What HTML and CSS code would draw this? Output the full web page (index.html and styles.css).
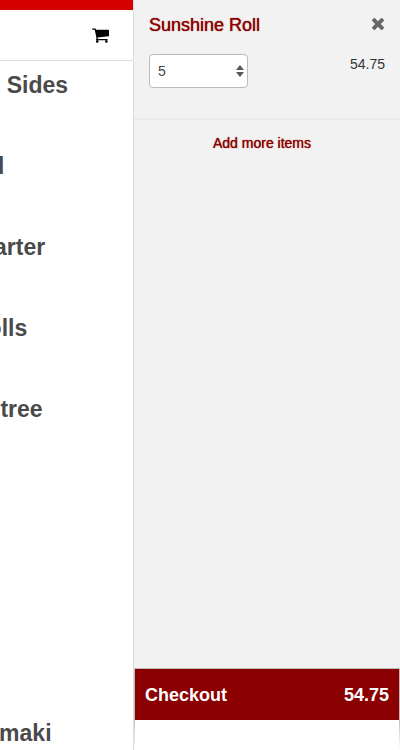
FILE: index.html
```html
<!DOCTYPE html>
<html lang="en">
<head>
    <meta charset="UTF-8">
    <meta name="viewport" content="width=device-width, initial-scale=1.0">
    <title>Your order</title>
    <link rel="stylesheet" href="styles.css">
</head>
<body>
    <div class="wrapper">
        <div class="page">
            <header class="header">
                <button class="icon-btn" type="button" aria-label="Cart">
                    <svg class="cart-icon" viewBox="0 0 1664 1536"><path d="M640 1408q0 52-38 90t-90 38-90-38-38-90 38-90 90-38 90 38 38 90zm896 0q0 52-38 90t-90 38-90-38-38-90 38-90 90-38 90 38 38 90zm128-1088v512q0 24-16.500 42.500t-40.500 21.500l-1044 122q13 60 13 70 0 16-24 64h920q26 0 45 19t19 45-19 45-45 19h-1024q-26 0-45-19t-19-45q0-11 8-31.500t16-36 21.500-40 15.500-29.500l-177-823h-204q-26 0-45-19t-19-45 19-45 45-19h256q16 0 28.500 6.500t19.500 15.500 13 24.500 8 26 5.500 29.500 4.500 26h1201q26 0 45 19t19 45z"/></svg>
                </button>
            </header>
            <ul class="menu">
                <li><h2>&nbsp;&nbsp;&amp; Sides</h2></li>
                <li><h2>lad</h2></li>
                <li><h2>Starter</h2></li>
                <li><h2>Rolls</h2></li>
                <li><h2>Entree</h2></li>
                <li></li>
                <li></li>
                <li></li>
                <li><h2>&nbsp;tomaki</h2></li>
            </ul>
        </div>

        <aside class="cart">
            <div class="cart-item">
                <div class="row">
                    <h3>Sunshine Roll</h3>
                    <button class="icon-btn" type="button" aria-label="Remove">
                        <svg class="close-icon" viewBox="0 0 1188 1188"><path d="M1188 956q0 40-28 68l-136 136q-28 28-68 28t-68-28l-294-294-294 294q-28 28-68 28t-68-28l-136-136q-28-28-28-68t28-68l294-294-294-294q-28-28-28-68t28-68l136-136q28-28 68-28t68 28l294 294 294-294q28-28 68-28t68 28l136 136q28 28 28 68t-28 68l-294 294 294 294q28 28 28 68z"/></svg>
                    </button>
                </div>
                <div class="row">
                    <div class="quantity">
                        <select aria-label="Quantity">
                            <option>1</option>
                            <option>2</option>
                            <option>3</option>
                            <option>4</option>
                            <option selected>5</option>
                        </select>
                        <svg class="arrows" viewBox="0 0 8 14"><path d="M4 1l4 5H0zM4 13l4-5H0z"/></svg>
                    </div>
                    <span class="price">54.75</span>
                </div>
            </div>
            <a class="add-more" href="#">Add more items</a>
            <div class="cart-footer">
                <button class="checkout" type="button">
                    <span>Checkout</span>
                    <span>54.75</span>
                </button>
            </div>
        </aside>
    </div>
</body>
</html>
```
FILE: styles.css
```css
* {
    box-sizing: border-box;
}
body {
    margin: 0;
    font-family: "Liberation Sans", Arial, sans-serif;
    font-size: 14px;
    line-height: 20px;
    color: #333;
    background: #fff;
}
h2, h3 {
    margin: 0;
    font-weight: normal;
}
button {
    font-family: inherit;
    border: 0;
    cursor: pointer;
}
svg {
    display: block;
}
.wrapper {
    display: flex;
    height: 100vh;
    overflow: hidden;
}

/* menu page, pushed aside by the cart */
.page {
    flex: 1;
    min-width: 0;
    overflow: hidden;
}
.header {
    display: flex;
    justify-content: flex-end;
    align-items: center;
    height: 61px;
    padding-right: 24px;
    border-top: 10px solid #d60000;
    border-bottom: 1px solid #ddd;
}
.icon-btn {
    padding: 0;
    background: none;
}
.cart-icon {
    width: 17px;
    height: 16px;
}
.menu {
    margin: 0 0 0 -29px;
    padding: 0;
    list-style: none;
}
.menu li {
    height: 81px;
    padding-top: 10px;
}
.menu h2 {
    font-size: 23px;
    font-weight: bold;
    line-height: 28px;
    white-space: nowrap;
    color: #4a4a4a;
}

/* cart */
.cart {
    display: flex;
    flex-direction: column;
    width: 267px;
    background: #f2f2f2;
    border-left: 1px solid #ddd;
}
.cart-item {
    padding: 15px 15px 30px;
    border-bottom: 2px solid #e9e9e9;
}
.row {
    display: flex;
    justify-content: space-between;
    align-items: flex-start;
}
.cart-item h3 {
    margin-bottom: 19px;
    font-size: 18px;
    color: #8b0000;
    text-shadow: 0 0 1px #8b0000;
}
.close-icon {
    width: 14px;
    height: 12px;
    margin-top: 3px;
    fill: #666;
}
.quantity {
    position: relative;
}
.quantity select {
    display: block;
    width: 99px;
    height: 34px;
    padding: 0 8px;
    font-family: inherit;
    font-size: 14px;
    color: #444;
    background: #fff;
    border: 1px solid #bbb;
    border-radius: 4px;
    appearance: none;
}
.arrows {
    position: absolute;
    top: 10px;
    right: 4px;
    width: 8px;
    height: 14px;
    fill: #555;
    pointer-events: none;
}
.add-more {
    margin-top: 13px;
    padding-right: 10px;
    text-align: center;
    text-decoration: none;
    color: #8b0000;
    text-shadow: 0 0 1px #8b0000;
}
.cart-footer {
    height: 82px;
    margin-top: auto;
    padding: 1px 1px 0;
    background: linear-gradient(#bbb 60%, #fff);
}
.cart-footer::after {
    content: "";
    display: block;
    height: 30px;
    background: #fff;
}
.checkout {
    display: flex;
    justify-content: space-between;
    align-items: center;
    width: 100%;
    height: 51px;
    padding: 2px 10px 0;
    font-size: 18px;
    font-weight: bold;
    color: #fff;
    background: #8b0000;
}
```
